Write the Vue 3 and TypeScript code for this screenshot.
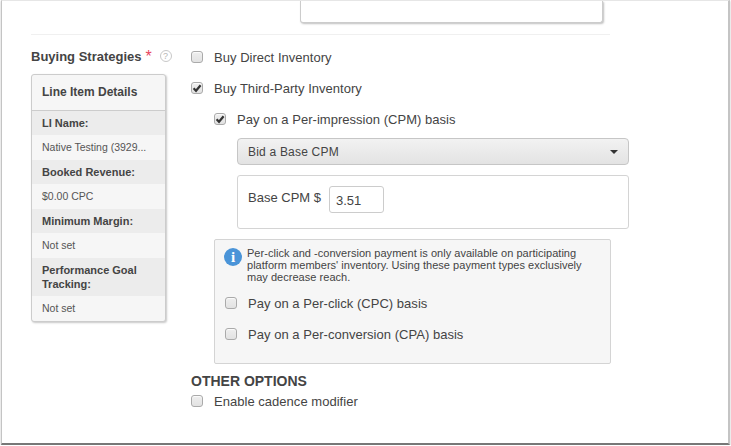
<script setup lang="ts">
interface DetailRow {
  label: string
  value: string
}

const details: DetailRow[] = [
  { label: 'LI Name:', value: 'Native Testing (3929...' },
  { label: 'Booked Revenue:', value: '$0.00 CPC' },
  { label: 'Minimum Margin:', value: 'Not set' },
  { label: 'Performance Goal Tracking:', value: 'Not set' }
]
</script>

<template>
  <div class="window">
    <div class="top-card-row">
      <div class="top-card"></div>
    </div>
    <div class="divider"></div>

    <div class="section">
      <aside class="side">
        <div class="side-title">
          <span class="title-text">Buying Strategies</span>
          <span class="req">*</span>
          <span class="help">?</span>
        </div>
        <div class="details">
          <div class="details-head">Line Item Details</div>
          <template v-for="row in details" :key="row.label">
            <div class="details-label">{{ row.label }}</div>
            <div class="details-value">{{ row.value }}</div>
          </template>
        </div>
      </aside>

      <main class="options">
        <label class="check-row row-direct">
          <span class="box"></span>
          <span>Buy Direct Inventory</span>
        </label>
        <label class="check-row row-third">
          <span class="box checked">
            <svg viewBox="0 0 12 12" width="12" height="12"><path d="M2.6 6.3 5 8.8 9.6 3.2" fill="none" stroke="#333" stroke-width="2.2" /></svg>
          </span>
          <span>Buy Third-Party Inventory</span>
        </label>

        <div class="nested">
          <label class="check-row row-cpm">
            <span class="box checked">
              <svg viewBox="0 0 12 12" width="12" height="12"><path d="M2.6 6.3 5 8.8 9.6 3.2" fill="none" stroke="#333" stroke-width="2.2" /></svg>
            </span>
            <span>Pay on a Per-impression (CPM) basis</span>
          </label>

          <div class="cpm-panel">
            <div class="select">
              <span>Bid a Base CPM</span>
              <span class="caret"></span>
            </div>
            <div class="base-box">
              <span>Base CPM $</span>
              <input class="cpm-input" type="text" value="3.51" />
            </div>
          </div>

          <div class="notice">
            <div class="notice-text">
              <span class="info-icon">i</span>
              <p>Per-click and -conversion payment is only available on participating platform members' inventory. Using these payment types exclusively may decrease reach.</p>
            </div>
            <label class="check-row notice-check">
              <span class="box"></span>
              <span>Pay on a Per-click (CPC) basis</span>
            </label>
            <label class="check-row notice-check">
              <span class="box"></span>
              <span>Pay on a Per-conversion (CPA) basis</span>
            </label>
          </div>
        </div>

        <h3 class="other-title">OTHER OPTIONS</h3>
        <label class="check-row row-cadence">
          <span class="box"></span>
          <span>Enable cadence modifier</span>
        </label>
      </main>
    </div>
  </div>
</template>

<style>
html,
body {
  margin: 0;
  background: #fff;
}
</style>

<style scoped>
.window {
  box-sizing: border-box;
  width: 729px;
  height: 445px;
  margin-left: 1px;
  padding-left: 29px;
  background: #fff;
  border-top: 1px solid #e6e6e6;
  border-right: 2px solid #c4c4c4;
  border-bottom: 2px solid #777;
  border-left: 1px solid #c4c4c4;
  box-shadow: 0 1px 2px rgba(0, 0, 0, 0.25);
  font-family: "Liberation Sans", Arial, sans-serif;
  font-size: 14px;
  color: #444;
  overflow: hidden;
}

.top-card-row {
  height: 23px;
  padding-left: 269px;
}

.top-card {
  box-sizing: border-box;
  width: 303px;
  height: 22px;
  background: #fff;
  border: 1px solid #ccc;
  border-top: 0;
  border-radius: 0 0 3px 3px;
  box-shadow: 1px 1px 2px rgba(0, 0, 0, 0.25);
}

.divider {
  width: 579px;
  height: 1px;
  margin-top: 10px;
  background: #f0f0f0;
}

.section {
  display: flex;
  gap: 25px;
}

.side {
  width: 135px;
  flex: none;
}

.side-title {
  display: flex;
  align-items: center;
  height: 39px;
  padding-top: 3px;
  box-sizing: border-box;
  white-space: nowrap;
}

.title-text {
  flex: none;
  font-size: 13px;
  font-weight: 700;
  color: #444;
}

.req {
  flex: none;
  width: 6px;
  margin-left: 4px;
  margin-top: 1px;
  font-size: 16px;
  line-height: 16px;
  color: #e8455f;
}

.help {
  box-sizing: border-box;
  display: flex;
  flex: none;
  align-items: center;
  justify-content: center;
  width: 12px;
  height: 12px;
  margin-left: 8px;
  border: 1px solid #c8c8c8;
  border-radius: 50%;
  font-size: 9px;
  color: #b5b5b5;
}

.details {
  box-sizing: border-box;
  width: 135px;
  background: #f6f6f6;
  border: 1px solid #ccc;
  border-radius: 3px;
  box-shadow: 1px 1px 2px rgba(0, 0, 0, 0.22);
  overflow: hidden;
}

.details-head {
  box-sizing: border-box;
  display: flex;
  align-items: center;
  height: 36px;
  padding: 0 0 2px 10px;
  border-bottom: 1px solid #ccc;
  font-size: 12px;
  font-weight: 700;
  color: #444;
}

.details-label {
  padding: 5px 10px;
  background: #ececec;
  font-size: 11px;
  line-height: 14px;
  font-weight: 700;
  color: #444;
}

.details-value {
  padding: 6px 10px 7px;
  font-size: 10.5px;
  line-height: 12px;
  color: #555;
  white-space: nowrap;
}

.options {
  flex: 1;
  min-width: 0;
}

.check-row {
  display: flex;
  align-items: center;
  gap: 11px;
  height: 16px;
  font-size: 13px;
  letter-spacing: 0.03px;
  white-space: nowrap;
}

.row-direct {
  margin-top: 14px;
}

.row-third {
  margin-top: 15px;
}

.row-cadence {
  margin-top: 4px;
}

.box {
  box-sizing: border-box;
  display: block;
  flex: none;
  width: 12px;
  height: 12px;
  background: linear-gradient(#eee, #e2e2e2);
  border: 1px solid #aaa;
  border-radius: 3px;
  box-shadow: inset 0 1px 1px rgba(255, 255, 255, 0.8);
}

.box svg {
  display: block;
  margin: -1px;
}

.nested {
  margin-left: 23px;
}

.row-cpm {
  margin-top: 15px;
}

.cpm-panel {
  width: 392px;
  margin-left: 23px;
}

.select {
  box-sizing: border-box;
  display: flex;
  align-items: center;
  justify-content: space-between;
  height: 27px;
  margin-top: 11px;
  padding: 0 10px 0 10px;
  background: linear-gradient(#f2f2f2, #e3e3e3);
  border: 1px solid #c6c6c6;
  border-radius: 4px;
  font-size: 12px;
  letter-spacing: 0.2px;
  color: #444;
}

.caret {
  width: 0;
  height: 0;
  border-top: 4px solid #333;
  border-left: 4px solid transparent;
  border-right: 4px solid transparent;
}

.base-box {
  box-sizing: border-box;
  display: flex;
  align-items: flex-start;
  gap: 8px;
  height: 54px;
  margin-top: 10px;
  padding: 10px 10px 0;
  background: #fff;
  border: 1px solid #d4d4d4;
  border-radius: 3px;
  font-size: 13px;
  line-height: 24px;
  color: #444;
}

.cpm-input {
  box-sizing: border-box;
  width: 55px;
  height: 27px;
  margin: 0;
  padding: 2px 6px 0;
  background: #fff;
  border: 1px solid #ccc;
  border-radius: 3px;
  font-family: inherit;
  font-size: 13px;
  color: #444;
  outline: none;
}

.notice {
  box-sizing: border-box;
  width: 397px;
  height: 125px;
  margin-top: 10px;
  padding: 7px 9px 0 9px;
  background: #f6f6f6;
  border: 1px solid #d4d4d4;
  border-radius: 2px;
}

.notice-text {
  display: flex;
  gap: 5px;
  font-size: 11px;
  line-height: 12px;
  letter-spacing: 0.03px;
  color: #444;
}

.notice-text p {
  width: 345px;
  margin: 0;
}

.info-icon {
  display: flex;
  flex: none;
  align-items: center;
  justify-content: center;
  width: 18px;
  height: 18px;
  margin-top: 1px;
  background: #4a94d8;
  border-radius: 50%;
  font-family: "Liberation Serif", serif;
  font-size: 15px;
  font-weight: 700;
  color: #fff;
}

.notice-check {
  margin-top: 15px;
  margin-left: 1px;
  gap: 11px;
}

.notice-text + .notice-check {
  margin-top: 12px;
}

.other-title {
  margin: 9px 0 0;
  font-size: 14px;
  line-height: 16px;
  font-weight: 700;
  color: #444;
}
</style>
